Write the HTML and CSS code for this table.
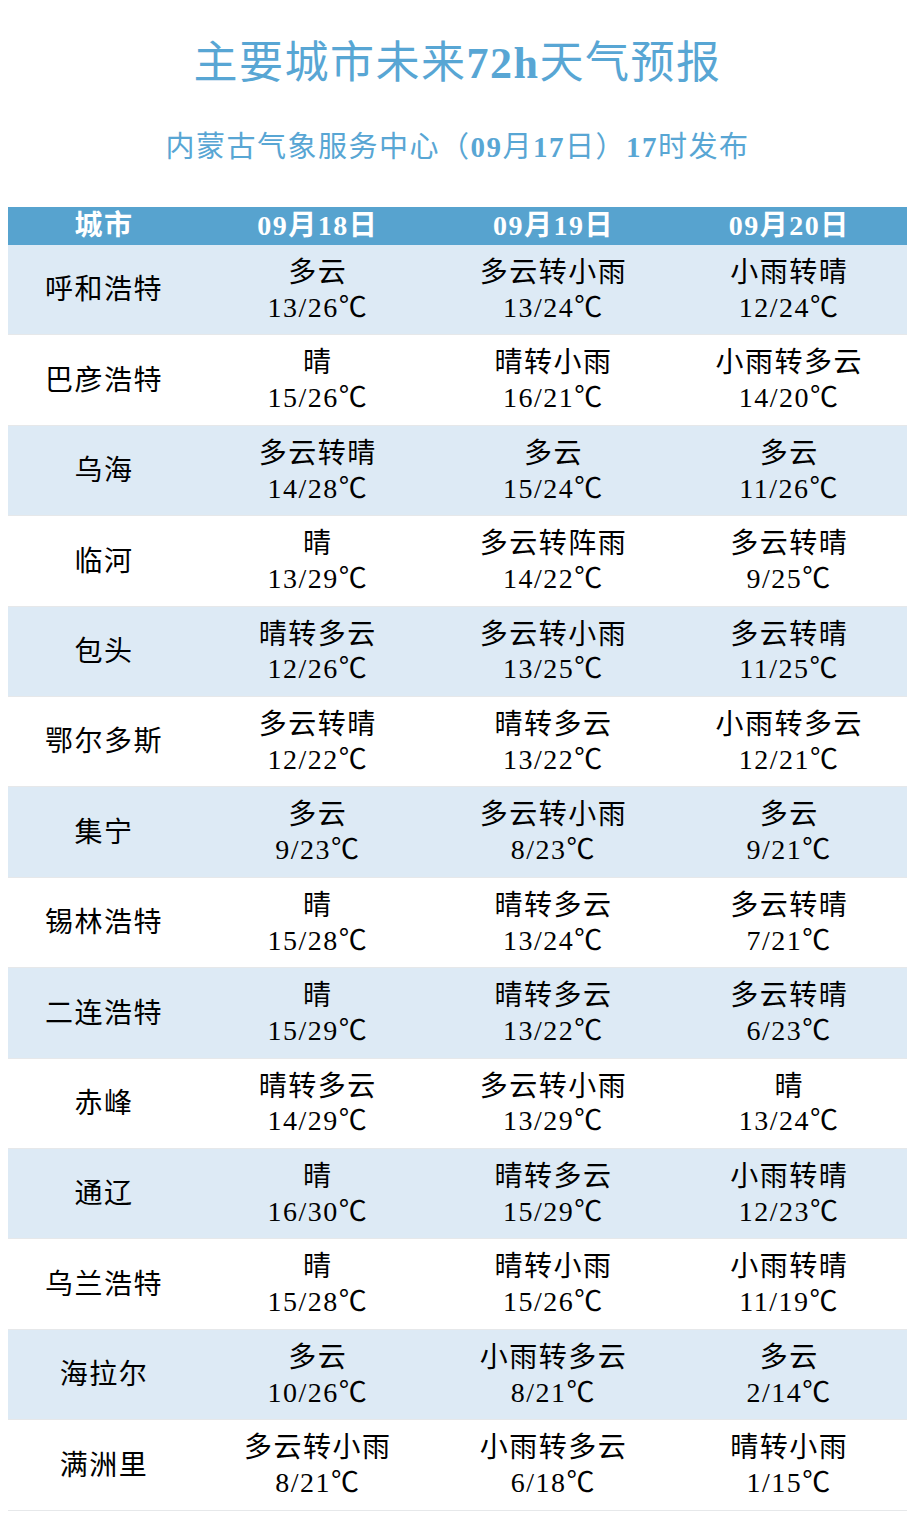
FILE: index.html
```html
<!DOCTYPE html>
<html lang="zh">
<head>
<meta charset="utf-8">
<title>主要城市未来72h天气预报</title>
<link rel="stylesheet" href="styles.css">
</head>
<body>
<header class="head">
  <h1 class="title">主要城市未来<b>72h</b>天气预报</h1>
  <p class="subtitle">内蒙古气象服务中心（<b>09</b>月<b>17</b>日）<b>17</b>时发布</p>
</header>
<table class="fc">
  <colgroup><col class="c-city"><col class="c-day"><col class="c-day"><col class="c-day"></colgroup>
  <thead>
    <tr><th>城市</th><th>09月18日</th><th>09月19日</th><th>09月20日</th></tr>
  </thead>
  <tbody>
    <tr><td>呼和浩特</td><td>多云<br>13/26℃</td><td>多云转小雨<br>13/24℃</td><td>小雨转晴<br>12/24℃</td></tr>
    <tr><td>巴彦浩特</td><td>晴<br>15/26℃</td><td>晴转小雨<br>16/21℃</td><td>小雨转多云<br>14/20℃</td></tr>
    <tr><td>乌海</td><td>多云转晴<br>14/28℃</td><td>多云<br>15/24℃</td><td>多云<br>11/26℃</td></tr>
    <tr><td>临河</td><td>晴<br>13/29℃</td><td>多云转阵雨<br>14/22℃</td><td>多云转晴<br>9/25℃</td></tr>
    <tr><td>包头</td><td>晴转多云<br>12/26℃</td><td>多云转小雨<br>13/25℃</td><td>多云转晴<br>11/25℃</td></tr>
    <tr><td>鄂尔多斯</td><td>多云转晴<br>12/22℃</td><td>晴转多云<br>13/22℃</td><td>小雨转多云<br>12/21℃</td></tr>
    <tr><td>集宁</td><td>多云<br>9/23℃</td><td>多云转小雨<br>8/23℃</td><td>多云<br>9/21℃</td></tr>
    <tr><td>锡林浩特</td><td>晴<br>15/28℃</td><td>晴转多云<br>13/24℃</td><td>多云转晴<br>7/21℃</td></tr>
    <tr><td>二连浩特</td><td>晴<br>15/29℃</td><td>晴转多云<br>13/22℃</td><td>多云转晴<br>6/23℃</td></tr>
    <tr><td>赤峰</td><td>晴转多云<br>14/29℃</td><td>多云转小雨<br>13/29℃</td><td>晴<br>13/24℃</td></tr>
    <tr><td>通辽</td><td>晴<br>16/30℃</td><td>晴转多云<br>15/29℃</td><td>小雨转晴<br>12/23℃</td></tr>
    <tr><td>乌兰浩特</td><td>晴<br>15/28℃</td><td>晴转小雨<br>15/26℃</td><td>小雨转晴<br>11/19℃</td></tr>
    <tr><td>海拉尔</td><td>多云<br>10/26℃</td><td>小雨转多云<br>8/21℃</td><td>多云<br>2/14℃</td></tr>
    <tr><td>满洲里</td><td>多云转小雨<br>8/21℃</td><td>小雨转多云<br>6/18℃</td><td>晴转小雨<br>1/15℃</td></tr>
  </tbody>
</table>
</body>
</html>
```

FILE: styles.css
```css
html, body {
  background: #ffffff;
}
body {
  margin: 8px;
  font-family: "Liberation Serif", "Noto Sans CJK SC", serif;
  color: #000000;
}
.head {
  text-align: center;
  color: #58a6d4;
  padding-top: 25px;
}
.title {
  margin: 0;
  font-size: 44px;
  line-height: 62px;
  font-weight: normal;
  letter-spacing: 1.5px;
}
.title b, .subtitle b {
  font-weight: bold;
}
.subtitle {
  margin: 32px 0 0;
  font-size: 29px;
  line-height: 40px;
  font-weight: normal;
  letter-spacing: 1.5px;
}
.fc {
  margin-top: 40px;
  width: 100%;
  border-collapse: collapse;
  table-layout: fixed;
}
.c-city { width: 192px; }
.fc th {
  background: #57a3cf;
  color: #ffffff;
  font-size: 28px;
  font-weight: bold;
  height: 38px;
  padding: 0;
  line-height: 38px;
  letter-spacing: 1.5px;
  text-align: center;
}
.fc td {
  font-size: 28px;
  line-height: 34.7px;
  padding: 11px 0 9px;
  letter-spacing: 1.5px;
  text-align: center;
  vertical-align: middle;
  font-weight: normal;
}
.fc tbody tr {
  border-bottom: 1px solid #e6e8ea;
}
.fc tbody tr:nth-child(odd) td {
  background: #ddeaf5;
}
```
